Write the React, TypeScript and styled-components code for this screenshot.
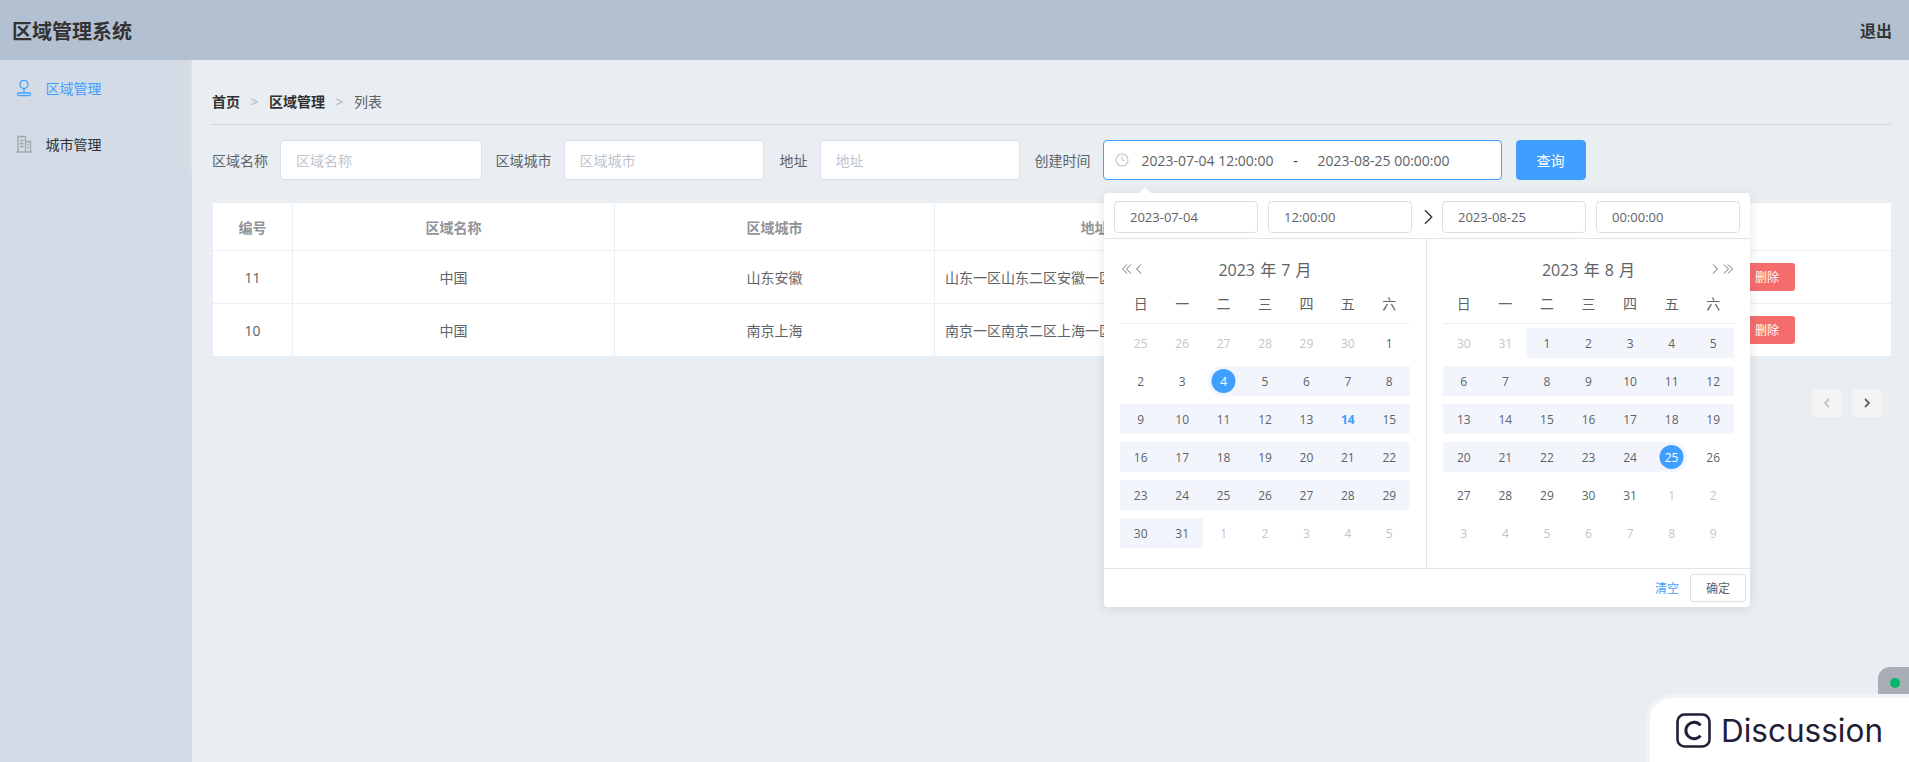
import React from "react";
import styled, { createGlobalStyle } from "styled-components";

const Global = createGlobalStyle`
  html, body { margin: 0; padding: 0; height: 100%; overflow: hidden; }
  #root { height: 100%; }
  * { box-sizing: border-box; }
  body { font-family: "Open Sans", "Noto Sans CJK SC", sans-serif; font-size: 14px; color: #606266; }
`;

const Page = styled.div`
  position: relative;
  width: 1909px;
  height: 762px;
  overflow: hidden;
  display: flex;
  flex-direction: column;
`;
const Header = styled.header`
  height: 60px;
  flex: none;
  background: #b3c0d1;
  color: #333;
  display: flex;
  align-items: center;
  justify-content: space-between;
  padding: 0 17px 0 12px;
  font-weight: 700;
`;
const Title = styled.div`font-size: 20px;`;
const Logout = styled.div`font-size: 16px;`;
const Body = styled.div`flex: 1; display: flex; min-height: 0;`;
const Aside = styled.aside`
  width: 192px;
  flex: none;
  background: #d3dce6;
`;
const Menu = styled.ul`
  list-style: none;
  margin: 0;
  padding: 0;
  width: 191px;
  height: 112px;
  border-right: 1px solid #e6e6e6;
`;
const MenuItem = styled.li<{ $active?: boolean }>`
  height: 56px;
  display: flex;
  align-items: center;
  padding-left: 15px;
  gap: 12.5px;
  color: ${(p) => (p.$active ? "#409eff" : "#303133")};
`;
const Main = styled.main`
  flex: 1;
  min-width: 0;
  background: #e9eef3;
  padding: 35px 18px 0 20px;
`;
const Crumbs = styled.nav`
  display: flex;
  align-items: center;
  height: 14px;
  line-height: 14px;
`;
const Crumb = styled.span<{ $bold?: boolean }>`
  color: ${(p) => (p.$bold ? "#303133" : "#606266")};
  font-weight: ${(p) => (p.$bold ? 700 : 400)};
`;
const Sep = styled.span`
  color: #c0c4cc;
  margin: 0 10.5px;
  font-weight: 700;
  font-size: 14px;
`;
const Divider = styled.div`
  height: 1px;
  background: #d0d4da;
  margin-top: 15px;
`;
const Form = styled.form`
  display: flex;
  align-items: center;
  margin-top: 15px;
  height: 40px;
`;
const Label = styled.label`
  padding-right: 12px;
  white-space: nowrap;
  color: #606266;
`;
const Field = styled.div<{ $mr: number }>`
  display: flex;
  align-items: center;
  margin-right: ${(p) => p.$mr}px;
`;
const TextInput = styled.input<{ $w: number }>`
  width: ${(p) => p.$w}px;
  height: 40px;
  border: 1px solid #dcdfe6;
  border-radius: 4px;
  background: #fff;
  padding: 0 15px;
  font: inherit;
  color: #606266;
  outline: none;
  &::placeholder { color: #c0c4cc; opacity: 1; }
`;
const RangeEditor = styled.div`
  width: 399.5px;
  height: 40px;
  border: 1px solid #409eff;
  border-radius: 4px;
  background: #fff;
  display: flex;
  align-items: center;
  padding-left: 11px;
  color: #606266;
`;
const RangeValue = styled.span`
  width: 146px;
  text-align: center;
  white-space: nowrap;
`;
const RangeDash = styled.span`
  width: 30px;
  text-align: center;
  color: #303133;
`;
const ClockSlot = styled.span`
  display: flex;
  width: 20px;
`;
const QueryBtn = styled.button`
  width: 70px;
  height: 40px;
  border: 1px solid #409eff;
  border-radius: 4px;
  background: #409eff;
  color: #fff;
  font: inherit;
`;
const Table = styled.div`
  margin-top: 23px;
  background: #fff;
  border-left: 1px solid #ebeef5;
  font-size: 14px;
`;
const Row = styled.div<{ $head?: boolean }>`
  display: grid;
  grid-template-columns: 80px 322px 320px 320px 1fr;
  height: ${(p) => (p.$head ? 48 : 53)}px;
  border-bottom: 1px solid #ebeef5;
  color: ${(p) => (p.$head ? "#909399" : "#606266")};
  font-weight: ${(p) => (p.$head ? 700 : 400)};
  &:last-child { border-bottom: 0; height: 52px; }
`;
const Cell = styled.div<{ $left?: boolean; $last?: boolean }>`
  display: flex;
  align-items: center;
  justify-content: ${(p) => (p.$left ? "flex-start" : "center")};
  padding: ${(p) => (p.$left ? "0 10px" : "0")};
  border-right: ${(p) => (p.$last ? "0" : "1px solid #ebeef5")};
  white-space: nowrap;
  overflow: hidden;
`;
const Actions = styled(Cell)`
  justify-content: flex-end;
  padding-right: 96px;
`;
const DangerBtn = styled.button`
  width: 56px;
  height: 28px;
  border: 0;
  border-radius: 3px;
  background: #f56c6c;
  color: #fff;
  font: inherit;
  font-size: 12px;
`;
const Pager = styled.div`
  display: flex;
  justify-content: flex-end;
  gap: 10px;
  margin-top: 33px;
  padding-right: 9px;
`;
const PageBtn = styled.button<{ $off?: boolean }>`
  width: 30px;
  height: 28px;
  padding: 0;
  border: 0;
  border-radius: 2px;
  background: #f4f4f5;
  color: ${(p) => (p.$off ? "#c0c4cc" : "#606266")};
  display: flex;
  align-items: center;
  justify-content: center;
`;

const Popper = styled.div`
  position: absolute;
  left: 1104px;
  top: 193px;
  width: 646px;
  height: 414px;
  background: #fff;
  border-radius: 4px;
  box-shadow: 0 2px 12px rgba(0, 0, 0, 0.1);
  display: flex;
  flex-direction: column;
  color: #606266;
  &::before {
    content: "";
    position: absolute;
    left: 35px;
    top: -6px;
    width: 0;
    height: 0;
    border: 6px solid transparent;
    border-top: 0;
    border-bottom-color: #fff;
  }
`;
const TimeHeader = styled.div`
  height: 46px;
  flex: none;
  border-bottom: 1px solid #e4e4e4;
  display: flex;
  align-items: flex-start;
  padding: 8px 10px 0;
`;
const TimeInput = styled.div<{ $mr?: number }>`
  width: 144px;
  height: 32px;
  border: 1px solid #dcdfe6;
  border-radius: 4px;
  padding-left: 15px;
  line-height: 30px;
  font-size: 13px;
  margin-right: ${(p) => p.$mr ?? 0}px;
`;
const TimeArrow = styled.div`
  width: 29px;
  height: 32px;
  margin-left: 1px;
  display: flex;
  align-items: center;
  justify-content: center;
  color: #303133;
`;
const Panes = styled.div`
  flex: 1;
  display: flex;
  min-height: 0;
`;
const Pane = styled.div<{ $left?: boolean }>`
  width: 323px;
  padding: 0 16px;
  border-right: ${(p) => (p.$left ? "1px solid #e4e4e4" : "0")};
`;
const PaneHeader = styled.div`
  position: relative;
  height: 28px;
  margin-top: 17px;
  display: flex;
  align-items: center;
  justify-content: center;
  font-size: 16px;
  line-height: 28px;
  word-spacing: 1px;
`;
const NavIcons = styled.div<{ $right?: boolean }>`
  position: absolute;
  top: 7px;
  ${(p) => (p.$right ? "right: 0;" : "left: 0.5px;")}
  display: flex;
  gap: ${(p) => (p.$right ? 1 : 0)}px;
  color: #606266;
`;
const Weeks = styled.div`
  display: grid;
  grid-template-columns: repeat(7, 1fr);
  height: 37px;
  margin-top: 3px;
  margin-bottom: 4px;
  border-bottom: 1px solid #ebeef5;
  font-size: 14px;
  text-align: center;
  line-height: 34px;
`;
const DayRow = styled.div`
  display: grid;
  grid-template-columns: repeat(7, 1fr);
  margin-bottom: 8px;
`;
const Day = styled.div<{ $muted?: boolean; $inRange?: boolean; $today?: boolean; $start?: boolean; $end?: boolean }>`
  height: 30px;
  display: flex;
  align-items: center;
  justify-content: center;
  font-size: 12px;
  color: ${(p) => (p.$muted ? "#c0c4cc" : p.$today ? "#409eff" : "#606266")};
  font-weight: ${(p) => (p.$today ? 700 : 400)};
  background: ${(p) => (p.$inRange ? "#f2f6fc" : "transparent")};
  margin-left: ${(p) => (p.$start ? 5 : 0)}px;
  margin-right: ${(p) => (p.$end ? 5 : 0)}px;
  border-radius: ${(p) => (p.$start ? "15px 0 0 15px" : p.$end ? "0 15px 15px 0" : "0")};
`;
const Circle = styled.span<{ $shift: number }>`
  width: 24px;
  height: 24px;
  border-radius: 50%;
  background: #409eff;
  color: #fff;
  display: flex;
  align-items: center;
  justify-content: center;
  transform: translateX(${(p) => p.$shift}px);
`;
const Footer = styled.div`
  height: 39px;
  flex: none;
  border-top: 1px solid #e4e4e4;
  display: flex;
  align-items: center;
  justify-content: flex-end;
  padding-right: 4px;
  font-size: 12px;
`;
const ClearLink = styled.span`
  color: #409eff;
  margin-right: 11px;
`;
const OkBtn = styled.button`
  width: 56px;
  height: 28px;
  border: 1px solid #dcdfe6;
  border-radius: 3px;
  background: #fff;
  color: #606266;
  font: inherit;
  font-size: 12px;
`;
const StatusTab = styled.div`
  position: absolute;
  right: 0;
  top: 667px;
  width: 31px;
  height: 40px;
  background: #a8aeb6;
  border-radius: 12px 0 0 0;
  &::after {
    content: "";
    position: absolute;
    left: 12px;
    top: 11px;
    width: 10px;
    height: 10px;
    border-radius: 50%;
    background: #00b96b;
  }
`;
const Discuss = styled.div`
  position: absolute;
  left: 1650px;
  top: 698px;
  width: 270px;
  height: 80px;
  background: #fff;
  border-radius: 22px 0 0 0;
  box-shadow: 0 0 0 4px #f0f3f7;
  display: flex;
  align-items: flex-start;
  padding: 15px 0 0 26px;
  gap: 10px;
  font-family: Inter, sans-serif;
  font-size: 31.5px;
  line-height: 35px;
  color: #1f2037;
`;

const PinIcon = () => (
  <svg width="18" height="18" viewBox="0 0 18 18" fill="none" stroke="#409eff" strokeWidth="1.3">
    <circle cx="9" cy="5.4" r="4" />
    <path d="M9 9.6v4.2" />
    <rect x="2.8" y="14" width="12.4" height="2.6" rx="0.6" />
  </svg>
);
const BuildingIcon = () => (
  <svg width="18" height="18" viewBox="0 0 18 18" fill="none" stroke="#a0a4ab" strokeWidth="1.3">
    <path d="M3 17V1.5h7.5V17" />
    <path d="M10.5 6.5h5V17" />
    <path d="M5 5.5h3.5M5 8.5h3.5M5 11.5h3.5M12.2 9.5h1.6M12.2 12.5h1.6" />
    <path d="M0.5 17h17" />
  </svg>
);
const ClockIcon = () => (
  <svg width="14" height="14" viewBox="0 0 14 14" fill="none" stroke="#c0c4cc" strokeWidth="1.1">
    <circle cx="7" cy="7" r="6" />
    <path d="M7 3.4V7.3h3" />
  </svg>
);
const Chevron = ({ dir, size = 12 }: { dir: "l" | "r"; size?: number }) => (
  <svg width={size} height={size} viewBox="0 0 12 12" fill="none" stroke="currentColor" strokeWidth={size > 12 ? 0.9 : 1}>
    <path d={dir === "l" ? "M8 1.5 3.5 6 8 10.5" : "M4 1.5 8.5 6 4 10.5"} />
  </svg>
);
const DoubleChevron = ({ dir }: { dir: "l" | "r" }) => (
  <svg width="12" height="12" viewBox="0 0 12 12" fill="none" stroke="currentColor" strokeWidth="0.9">
    <path d={dir === "l" ? "M6 1.5 1.5 6 6 10.5M10 1.5 5.5 6 10 10.5" : "M2 1.5 6.5 6 2 10.5M6 1.5 10.5 6 6 10.5"} />
  </svg>
);
const BoldChevron = ({ dir }: { dir: "l" | "r" }) => (
  <svg width="12" height="12" viewBox="0 0 12 12" fill="none" stroke="currentColor" strokeWidth="1.8">
    <path d={dir === "l" ? "M8 2 4 6 8 10" : "M4 2 8 6 4 10"} />
  </svg>
);
const LogoC = () => (
  <svg width="35" height="35" viewBox="0 0 35 35" fill="none" stroke="#1f2037" strokeWidth="2.6">
    <rect x="1.5" y="1.5" width="32" height="32" rx="7" />
    <path d="M24.5 12.4a8.2 8.2 0 1 0 0 10.2" strokeWidth="3" />
  </svg>
);

type D = { n: number; muted?: boolean; inRange?: boolean; today?: boolean; start?: boolean; end?: boolean };
const range = (a: number, b: number, extra: Partial<D> = {}): D[] => {
  const r: D[] = [];
  for (let i = a; i <= b; i++) r.push({ n: i, ...extra });
  return r;
};
const july: D[] = [
  ...range(25, 30, { muted: true }),
  { n: 1 }, { n: 2 }, { n: 3 }, { n: 4, inRange: true, start: true },
  ...range(5, 13, { inRange: true }), { n: 14, inRange: true, today: true },
  ...range(15, 31, { inRange: true }),
  ...range(1, 5, { muted: true }),
];
const august: D[] = [
  ...range(30, 31, { muted: true }),
  ...range(1, 24, { inRange: true }),
  { n: 25, inRange: true, end: true }, { n: 26 },
  ...range(27, 31),
  ...range(1, 9, { muted: true }),
];
const weekNames = ["日", "一", "二", "三", "四", "五", "六"];
const chunk = (a: D[]) => {
  const out: D[][] = [];
  for (let i = 0; i < a.length; i += 7) out.push(a.slice(i, i + 7));
  return out;
};

const Month = ({ title, days, left }: { title: string; days: D[]; left?: boolean }) => (
  <Pane $left={left}>
    <PaneHeader>
      {left ? (
        <NavIcons><DoubleChevron dir="l" /><Chevron dir="l" /></NavIcons>
      ) : (
        <NavIcons $right><Chevron dir="r" /><DoubleChevron dir="r" /></NavIcons>
      )}
      {title}
    </PaneHeader>
    <Weeks>{weekNames.map((w) => <span key={w}>{w}</span>)}</Weeks>
    {chunk(days).map((row, i) => (
      <DayRow key={i}>
        {row.map((d, j) => (
          <Day key={j} $muted={d.muted} $inRange={d.inRange} $today={d.today} $start={d.start} $end={d.end}>
            {d.start || d.end ? <Circle $shift={d.start ? -2.5 : 2.5}>{d.n}</Circle> : d.n}
          </Day>
        ))}
      </DayRow>
    ))}
  </Pane>
);

const rows = [
  { id: 11, name: "中国", city: "山东安徽", addr: "山东一区山东二区安徽一区" },
  { id: 10, name: "中国", city: "南京上海", addr: "南京一区南京二区上海一区" },
];

export default function App() {
  return (
    <Page>
      <Global />
      <Header>
        <Title>区域管理系统</Title>
        <Logout>退出</Logout>
      </Header>
      <Body>
        <Aside>
          <Menu>
            <MenuItem $active><PinIcon />区域管理</MenuItem>
            <MenuItem><BuildingIcon />城市管理</MenuItem>
          </Menu>
        </Aside>
        <Main>
          <Crumbs>
            <Crumb $bold>首页</Crumb><Sep>&gt;</Sep>
            <Crumb $bold>区域管理</Crumb><Sep>&gt;</Sep>
            <Crumb>列表</Crumb>
          </Crumbs>
          <Divider />
          <Form>
            <Field $mr={14}><Label>区域名称</Label><TextInput $w={201.5} placeholder="区域名称" /></Field>
            <Field $mr={15.5}><Label>区域城市</Label><TextInput $w={200.5} placeholder="区域城市" /></Field>
            <Field $mr={14.5}><Label>地址</Label><TextInput $w={200.5} placeholder="地址" /></Field>
            <Field $mr={13.5}>
              <Label>创建时间</Label>
              <RangeEditor>
                <ClockSlot><ClockIcon /></ClockSlot>
                <RangeValue>2023-07-04 12:00:00</RangeValue>
                <RangeDash>-</RangeDash>
                <RangeValue>2023-08-25 00:00:00</RangeValue>
              </RangeEditor>
            </Field>
            <QueryBtn type="button">查询</QueryBtn>
          </Form>
          <Table>
            <Row $head>
              <Cell>编号</Cell><Cell>区域名称</Cell><Cell>区域城市</Cell><Cell>地址</Cell><Cell $last />
            </Row>
            {rows.map((r) => (
              <Row key={r.id}>
                <Cell>{r.id}</Cell>
                <Cell>{r.name}</Cell>
                <Cell>{r.city}</Cell>
                <Cell $left>{r.addr}</Cell>
                <Actions $last><DangerBtn type="button">删除</DangerBtn></Actions>
              </Row>
            ))}
          </Table>
          <Pager>
            <PageBtn $off type="button"><BoldChevron dir="l" /></PageBtn>
            <PageBtn type="button"><BoldChevron dir="r" /></PageBtn>
          </Pager>
        </Main>
      </Body>
      <Popper>
        <TimeHeader>
          <TimeInput $mr={10}>2023-07-04</TimeInput>
          <TimeInput>12:00:00</TimeInput>
          <TimeArrow><Chevron dir="r" size={18} /></TimeArrow>
          <TimeInput $mr={10}>2023-08-25</TimeInput>
          <TimeInput>00:00:00</TimeInput>
        </TimeHeader>
        <Panes>
          <Month left title="2023 年 7 月" days={july} />
          <Month title="2023 年 8 月" days={august} />
        </Panes>
        <Footer>
          <ClearLink>清空</ClearLink>
          <OkBtn type="button">确定</OkBtn>
        </Footer>
      </Popper>
      <StatusTab />
      <Discuss><LogoC />Discussion</Discuss>
    </Page>
  );
}
